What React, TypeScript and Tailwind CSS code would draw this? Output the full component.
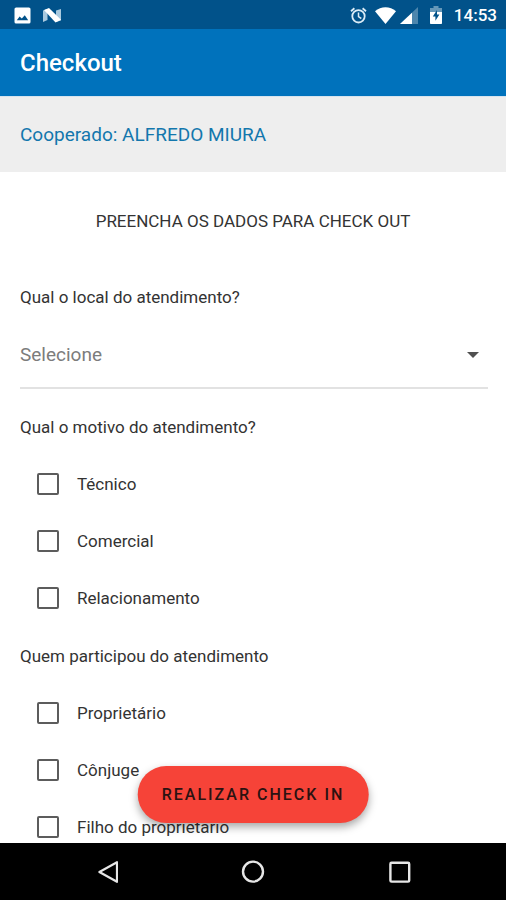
import type { ReactNode } from "react";

type GroupProps = { title: string; options: string[] };

function StatusBar() {
  return (
    <div className="flex h-[29px] shrink-0 items-center justify-between bg-[#01528a] pl-3.5 pr-[9px] pt-px text-white">
      <div className="flex items-center gap-3">
        <svg width="17" height="17" viewBox="0 0 17 17" aria-hidden="true">
          <rect x="0.5" y="0.5" width="16" height="16" rx="1.6" fill="#fff" />
          <path d="M2.8 13.2l2.8-3.8 2.2 2 3-3.2 3.4 5z" fill="#01528a" />
        </svg>
        <svg width="18" height="15" viewBox="0 0 18 15" aria-hidden="true">
          <path d="M0 2.5L4.5 1v11L0 14z" fill="#a9c9de" />
          <path d="M13 2.5L18 1v11.5L13 14z" fill="#a9c9de" />
          <path d="M1 2L6 0 18 11.8 12.5 14.5z" fill="#fff" />
        </svg>
      </div>
      <div className="flex items-center">
        <svg width="17" height="17" viewBox="0 0 17 17" fill="none" stroke="#dcecf6" aria-hidden="true">
          <circle cx="8.5" cy="9.3" r="6.2" strokeWidth="1.8" />
          <path d="M8.5 5.5v4.2l2.8 1.8" strokeWidth="1.5" />
          <path d="M1 4.2l3.4-2.9M16 4.2l-3.4-2.9" strokeWidth="1.8" />
        </svg>
        <svg className="ml-2" width="21" height="17" viewBox="0 0 21 17" aria-hidden="true">
          <path d="M0 4.2C6-1 15-1 21 4.2L10.5 17z" fill="#fff" />
        </svg>
        <svg className="ml-1" width="18" height="17" viewBox="0 0 18 17" aria-hidden="true">
          <path d="M18 0v17H0z" fill="#4d86ad" />
          <path d="M12 5.7V17H0z" fill="#fff" />
        </svg>
        <svg className="ml-3" width="12" height="18" viewBox="0 0 12 18" aria-hidden="true">
          <path d="M3.5 0h5v2H12v4H0V2h3.5z" fill="#6698b9" />
          <path d="M0 6h12v11.2a.8.8 0 0 1-.8.8H.8a.8.8 0 0 1-.8-.8z" fill="#fff" />
          <path d="M7 4L2.8 10.5h2.6v4.3l4-6.2H7z" fill="#01528a" />
        </svg>
        <span className="ml-3 text-[17px] leading-5 font-medium">14:53</span>
      </div>
    </div>
  );
}

function Question({ children }: { children: ReactNode }) {
  return <span className="flex h-[57px] items-center text-[17px] leading-6">{children}</span>;
}

function CheckGroup({ title, options }: GroupProps) {
  return (
    <fieldset className="pb-px">
      <legend>
        <Question>{title}</Question>
      </legend>
      {options.map((option) => (
        <label key={option} className="flex h-[57px] items-center gap-[18px] pl-[17px] text-[17px] leading-6">
          <input
            type="checkbox"
            className="size-[22px] shrink-0 appearance-none rounded-xs border-2 border-[#5c5c5c] bg-white checked:bg-[#0072bc]"
          />
          {option}
        </label>
      ))}
    </fieldset>
  );
}

function NavigationBar() {
  return (
    <nav className="flex h-[57px] shrink-0 items-center justify-center gap-[123px] bg-black">
      <button type="button" aria-label="Voltar">
        <svg width="24" height="24" viewBox="0 0 24 24" fill="none" stroke="#e6e6e6" strokeWidth="2.2" strokeLinejoin="round">
          <path d="M23 2.2v19.6L5.4 12z" />
        </svg>
      </button>
      <button type="button" aria-label="Início">
        <svg width="24" height="24" viewBox="0 0 24 24" fill="none" stroke="#e6e6e6" strokeWidth="2.4">
          <circle cx="12" cy="11.6" r="10" />
        </svg>
      </button>
      <button type="button" aria-label="Recentes">
        <svg width="24" height="24" viewBox="0 0 24 24" fill="none" stroke="#e6e6e6" strokeWidth="2.4">
          <rect x="2.4" y="2.8" width="18.8" height="18.8" rx="1.2" />
        </svg>
      </button>
    </nav>
  );
}

export default function App() {
  return (
    <div className="flex h-screen flex-col bg-white font-[Roboto,sans-serif] text-[#333333]">
      <StatusBar />
      <header className="flex h-[67px] shrink-0 items-center bg-[#0072bc] px-5">
        <h1 className="text-2xl font-medium text-white">Checkout</h1>
      </header>
      <div className="flex h-[76px] shrink-0 items-center border-t border-[#d5e3ee] bg-[#eeeeee] px-5 text-[19px] leading-6 text-[#1377ad]">
        Cooperado: ALFREDO MIURA
      </div>
      <div className="relative min-h-0 flex-1">
        <main className="h-full overflow-y-auto px-5 [scrollbar-width:none]">
          <h2 className="pt-[35px] pb-[33px] text-center text-[17px] leading-7">PREENCHA OS DADOS PARA CHECK OUT</h2>
          <label htmlFor="local">
            <Question>Qual o local do atendimento?</Question>
          </label>
          <div className="relative mb-[9px] -mr-0.5">
            <select
              id="local"
              className="h-[64px] w-full appearance-none border-b-2 border-[#e2e2e2] bg-transparent pb-0.5 text-[19px] leading-6 text-[#7c7c7c] outline-none"
            >
              <option>Selecione</option>
            </select>
            <svg className="pointer-events-none absolute top-[27px] right-[9px]" width="12" height="6" viewBox="0 0 12 6" aria-hidden="true">
              <path d="M0 0h12L6 6z" fill="#505050" />
            </svg>
          </div>
          <CheckGroup title="Qual o motivo do atendimento?" options={["Técnico", "Comercial", "Relacionamento"]} />
          <CheckGroup title="Quem participou do atendimento" options={["Proprietário", "Cônjuge", "Filho do proprietário"]} />
        </main>
        <button
          type="button"
          className="absolute bottom-5 left-1/2 h-[57px] -translate-x-1/2 rounded-full bg-[#f64338] px-6 text-[16px] leading-6 font-medium tracking-[2px] whitespace-nowrap text-[#2b1211] shadow-[0_4px_8px_rgba(0,0,0,0.35)]"
        >
          REALIZAR CHECK IN
        </button>
      </div>
      <NavigationBar />
    </div>
  );
}
